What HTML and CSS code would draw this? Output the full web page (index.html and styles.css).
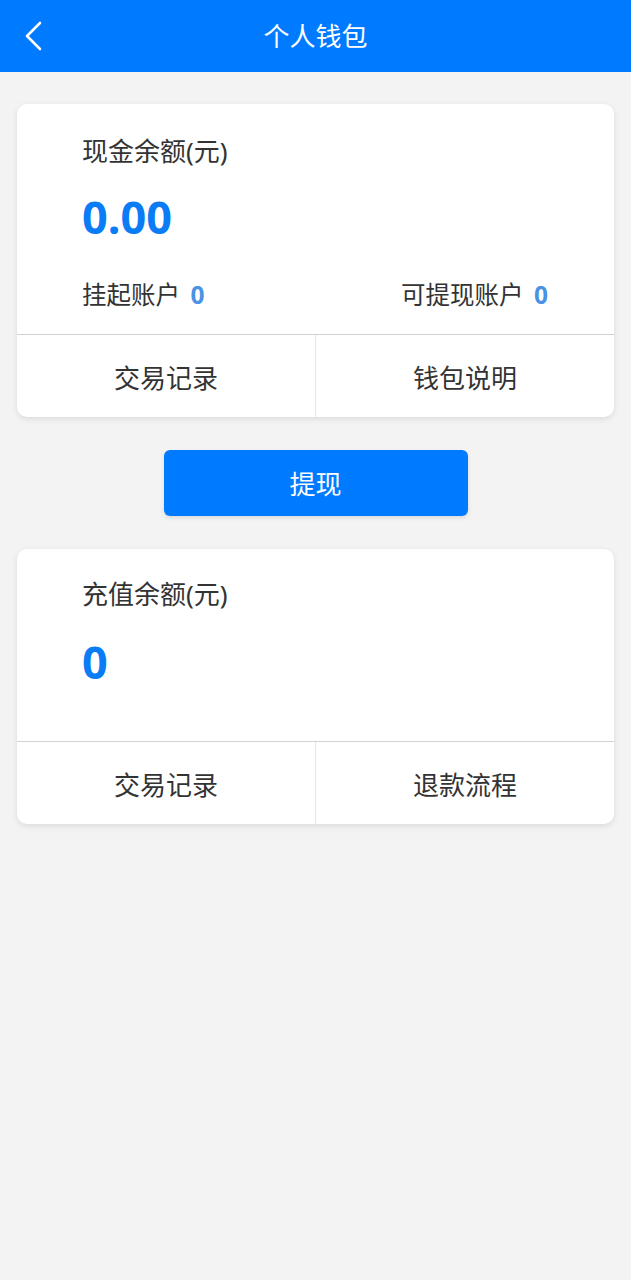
FILE: index.html
```html
<!DOCTYPE html>
<html lang="zh-CN">
<head>
  <meta charset="UTF-8" />
  <meta name="viewport" content="width=device-width, initial-scale=1.0" />
  <title>个人钱包</title>
  <link rel="stylesheet" href="styles.css">
</head>
<body>
  <header class="topbar">
    <a class="back" href="#">
      <svg width="20" height="30" viewBox="0 0 20 30"><path d="M16 2 L3 15 L16 28" fill="none" stroke="#fff" stroke-width="2.6" stroke-linecap="round" stroke-linejoin="round"/></svg>
    </a>
    <h1>个人钱包</h1>
  </header>

  <main class="content">
    <section class="card">
      <div class="card-body">
        <div class="label">现金余额(元)</div>
        <div class="amount">0.00</div>
        <div class="sub-row">
          <span>挂起账户 <b>0</b></span>
          <span>可提现账户 <b>0</b></span>
        </div>
      </div>
      <div class="card-actions">
        <a href="#">交易记录</a>
        <a href="#">钱包说明</a>
      </div>
    </section>

    <button class="withdraw" type="button">提现</button>

    <section class="card">
      <div class="card-body card-body--tall">
        <div class="label">充值余额(元)</div>
        <div class="amount">0</div>
      </div>
      <div class="card-actions">
        <a href="#">交易记录</a>
        <a href="#">退款流程</a>
      </div>
    </section>
  </main>
</body>
</html>
```

FILE: styles.css
```css
body {
  margin: 0;
  font-family: 'Noto Sans', 'Noto Sans CJK SC', sans-serif;
  background: #f3f3f3;
  color: #333;
  min-height: 100vh;
}
.topbar {
  position: relative;
  height: 72px;
  background: #007aff;
  display: flex;
  align-items: center;
  justify-content: center;
}
.topbar h1 {
  margin: 0 0 3px;
  color: #fff;
  font-size: 26px;
  font-weight: 400;
}
.back {
  position: absolute;
  left: 24px;
  top: 21px;
  display: flex;
}
.content {
  padding: 32px 17px;
  display: flex;
  flex-direction: column;
  align-items: center;
}
.card {
  width: 100%;
  background: #fff;
  border-radius: 10px;
  box-shadow: 0 2px 6px rgba(0, 0, 0, 0.1);
  overflow: hidden;
}
.card-body {
  padding: 29px 66px 21px 65px;
  border-bottom: 1px solid #d2d2d2;
}
.card-body--tall {
  padding-top: 27px;
  padding-bottom: 49px;
}
.label {
  font-size: 26px;
  line-height: 36px;
}
.amount {
  margin-top: 18px;
  font-size: 45px;
  line-height: 60px;
  font-weight: 700;
  color: #0a7cf5;
}
.card-body--tall .amount {
  margin-top: 20px;
}
.sub-row {
  margin-top: 30px;
  display: flex;
  justify-content: space-between;
  font-size: 24.5px;
  line-height: 36px;
}
.sub-row b {
  margin-left: 4px;
  color: #4a92e4;
  font-weight: 700;
}
.card-actions {
  display: flex;
  height: 82px;
}
.card-actions a {
  flex: 1;
  display: flex;
  align-items: center;
  justify-content: center;
  padding-top: 2px;
  box-sizing: border-box;
  font-size: 26px;
  color: #333;
  text-decoration: none;
}
.card-actions a + a {
  border-left: 1px solid #e6e6e6;
}
.withdraw {
  margin: 33px 0;
  width: 304px;
  height: 66px;
  background: #007aff;
  color: #fff;
  border: none;
  border-radius: 6px;
  font-family: inherit;
  font-size: 26px;
  box-shadow: 0 2px 4px rgba(0, 0, 0, 0.1);
  cursor: pointer;
}
```
